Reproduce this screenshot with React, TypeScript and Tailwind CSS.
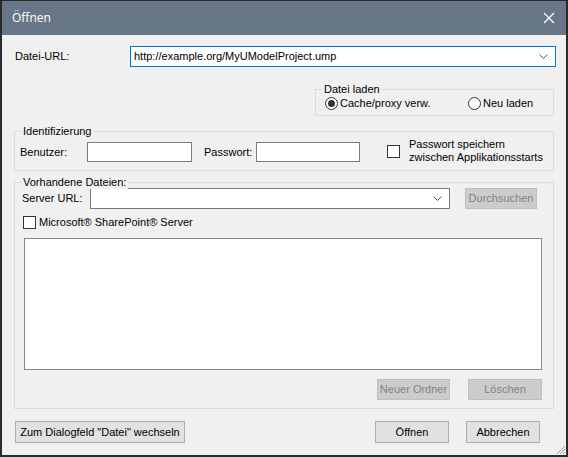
import React from "react";

const font = "font-['Liberation_Sans',Arial,sans-serif] text-[11px] text-black";

function Chevron() {
  return (
    <svg width="9" height="6" viewBox="0 0 9 6" className="shrink-0">
      <path d="M0.5 0.5 L4.5 4.5 L8.5 0.5" fill="none" stroke="#555" strokeWidth="1" />
    </svg>
  );
}

function Combo({ value, focused, className }: { value?: string; focused?: boolean; className?: string }) {
  return (
    <div
      className={`flex items-center h-[21px] bg-white border pl-[3px] pr-[7px] ${
        focused ? "border-[#0078d7]" : "border-[#7a7a7a]"
      } ${className ?? ""}`}
    >
      <span className="flex-1 truncate">{value}</span>
      <Chevron />
    </div>
  );
}

function Btn({ label, disabled, className }: { label: string; disabled?: boolean; className?: string }) {
  return (
    <div
      className={`flex items-center justify-center h-[21px] border ${
        disabled ? "bg-[#cccccc] border-[#bfbfbf] text-[#838383]" : "bg-[#e1e1e1] border-[#adadad] text-black"
      } ${className ?? ""}`}
    >
      {label}
    </div>
  );
}

function Radio({ checked }: { checked?: boolean }) {
  return (
    <span className="flex items-center justify-center w-[13px] h-[13px] rounded-full border border-[#333] bg-white shrink-0">
      {checked && <span className="w-[7px] h-[7px] rounded-full bg-[#333]" />}
    </span>
  );
}

function Check({ className }: { className?: string }) {
  return <span className={`block w-[13px] h-[13px] border border-[#333] bg-white shrink-0 ${className ?? ""}`} />;
}

function Group({ title, className, children }: { title: string; className?: string; children?: React.ReactNode }) {
  return (
    <div className={`relative border border-[#dcdcdc] ${className ?? ""}`}>
      <span className="absolute -top-[8px] left-[6px] px-[2px] bg-[#f0f0f0] leading-[14px]">{title}</span>
      {children}
    </div>
  );
}

export default function App() {
  return (
    <div className={`${font} relative w-[568px] h-[457px] bg-[#f0f0f0] border-x-2 border-b-2 border-t border-[#2a2a2a] flex flex-col`}>
      {/* title bar */}
      <div className="h-[34px] bg-[#687788] flex items-center justify-between pl-[10px] pr-[11px] shrink-0">
        <span className="font-['Open_Sans',sans-serif] text-[12px] text-white">Öffnen</span>
        <svg width="12" height="12" viewBox="0 0 12 12">
          <path d="M1 1 L11 11 M11 1 L1 11" stroke="#fff" strokeWidth="1.2" />
        </svg>
      </div>

      <div className="px-[12px] flex flex-col">
        {/* Datei-URL */}
        <div className="flex items-center mt-[11px]">
          <span className="w-[116px] pl-[1px]">Datei-URL:</span>
          <Combo value="http://example.org/MyUModelProject.ump" focused className="flex-1 -mr-[2px]" />
        </div>

        {/* Datei laden */}
        <Group title="Datei laden" className="ml-auto w-[239px] h-[27px] mt-[22px]">
          <div className="flex items-center h-full pl-[9px] pt-[1px]">
            <Radio checked />
            <span className="ml-[2px] w-[128px]">Cache/proxy verw.</span>
            <Radio />
            <span className="ml-[2px]">Neu laden</span>
          </div>
        </Group>

        {/* Identifizierung */}
        <Group title="Identifizierung" className="h-[40px] mt-[15px]">
          <div className="flex items-center h-full pt-[2px] pl-[5px]">
            <span className="w-[67px]">Benutzer:</span>
            <div className="w-[105px] h-[20px] bg-white border border-[#7a7a7a]" />
            <span className="ml-[12px] w-[52px]">Passwort:</span>
            <div className="w-[104px] h-[20px] bg-white border border-[#7a7a7a]" />
            <Check className="ml-[27px] -mt-[2px]" />
            <span className="ml-[9px] leading-[13px] -mt-[2px]">
              Passwort speichern
              <br />
              zwischen Applikationsstarts
            </span>
          </div>
        </Group>

        {/* Vorhandene Dateien */}
        <Group title="Vorhandene Dateien:" className="h-[227px] mt-[11px]">
          <div className="flex flex-col pl-[7px] pr-[11px]">
            <div className="flex items-center mt-[5px]">
              <span className="w-[68px]">Server URL:</span>
              <Combo className="w-[360px]" />
              <Btn label="Durchsuchen" disabled className="ml-[15px] w-[72px] h-[20px]" />
            </div>
            <div className="flex items-center mt-[5px] pl-[1px]">
              <Check />
              <span className="ml-[3px]">Microsoft® SharePoint® Server</span>
            </div>
            <div className="ml-[2px] mt-[7px] w-[518px] h-[132px] bg-white border border-[#828790]" />
            <div className="flex justify-end gap-[18px] mt-[9px]">
              <Btn label="Neuer Ordner" disabled className="w-[73px]" />
              <Btn label="Löschen" disabled className="w-[74px]" />
            </div>
          </div>
        </Group>

        {/* bottom buttons */}
        <div className="flex items-center mt-[12px]">
          <Btn label={'Zum Dialogfeld "Datei" wechseln'} className="ml-[1px] w-[170px] h-[22px]" />
          <Btn label="Öffnen" className="ml-auto w-[74px] h-[22px]" />
          <Btn label="Abbrechen" className="ml-[17px] mr-[14px] w-[74px] h-[22px]" />
        </div>
      </div>

      {/* resize grip */}
      <svg width="12" height="12" viewBox="0 0 12 12" className="absolute right-0 bottom-0">
        <path d="M11 3 L3 11 M11 6 L6 11 M11 9 L9 11" stroke="#9a9a9a" strokeWidth="1" />
      </svg>
    </div>
  );
}
